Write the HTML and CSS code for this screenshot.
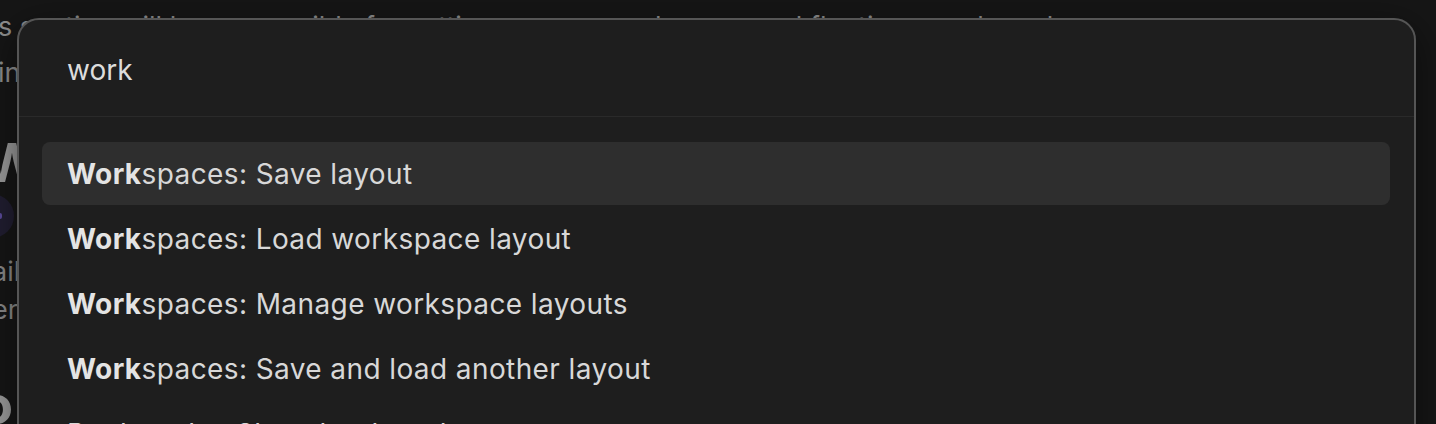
FILE: index.html
```html
<!DOCTYPE html>
<html lang="en">
<head>
<meta charset="utf-8">
<title>Command palette</title>
<link rel="stylesheet" href="styles.css">
</head>
<body>
<main class="page">
  <p class="line">s section will be responsible for setting up your workspace and floating panels and more</p>
  <p class="line">ing the layout for each device, then save it as a workspace layout</p>
  <h2 class="heading">Workspaces</h2>
  <div class="avatar-row"><span class="avatar"><span class="avatar-dot"></span></span></div>
  <p class="line line-small">ail</p>
  <p class="line line-small">er</p>
  <h2 class="heading heading-low">o</h2>
</main>

<div class="prompt" role="dialog">
  <div class="prompt-input">work</div>
  <ul class="suggestions">
    <li class="suggestion is-selected"><b>Work</b>spaces: Save layout</li>
    <li class="suggestion"><b>Work</b>spaces: Load workspace layout</li>
    <li class="suggestion"><b>Work</b>spaces: Manage workspace layouts</li>
    <li class="suggestion"><b>Work</b>spaces: Save and load another layout</li>
    <li class="suggestion">Bookmarks: Show bookmarks</li>
  </ul>
</div>
</body>
</html>
```

FILE: styles.css
```css
* { box-sizing: border-box; }

html, body {
  margin: 0;
  padding: 0;
  height: 100%;
  overflow: hidden;
}

body {
  background: #161616;
  font-family: Inter, "Noto Sans", "Liberation Sans", sans-serif;
  color: #9a9a9a;
  position: relative;
}

.page {
  padding-top: 4px;
  margin-left: -2px;
}

.line {
  margin: 0;
  font-size: 27px;
  line-height: 46px;
  white-space: nowrap;
  color: #8f8f8f;
}

.heading {
  margin: 39px 0 0 -14px;
  font-size: 54px;
  line-height: 56px;
  font-weight: 700;
  color: #9c9c9c;
}

.avatar-row {
  height: 50px;
  display: flex;
  align-items: center;
}

.avatar {
  width: 44px;
  height: 44px;
  border-radius: 50%;
  background: #211e31;
  margin-left: -28px;
  display: flex;
  align-items: center;
  justify-content: flex-end;
}

.avatar-dot {
  width: 4px;
  height: 6px;
  background: #5b4b9c;
  border-radius: 2px;
  margin-right: 12px;
}

.line-small {
  line-height: 38px;
  margin-left: -6px;
  color: #8a8a8a;
}

.avatar-row + .line-small {
  margin-top: 12px;
}

.heading-low {
  margin-top: 48px;
  margin-left: -18px;
}

.prompt {
  position: absolute;
  left: 17px;
  top: 18px;
  width: 1399px;
  height: 480px;
  background: #1e1e1e;
  border: 2px solid #555555;
  border-radius: 22px;
  box-shadow: 0 10px 40px rgba(0, 0, 0, 0.5);
}

.prompt-input {
  height: 97px;
  padding-left: 48px;
  padding-top: 4px;
  display: flex;
  align-items: center;
  font-size: 28px;
  color: #dcdcdc;
  border-bottom: 1px solid #2a2a2a;
}

.suggestions {
  list-style: none;
  margin: 0;
  padding: 25px 24px 0 23px;
}

.suggestion {
  height: 63px;
  margin-bottom: 2px;
  padding: 0 25px;
  display: flex;
  align-items: center;
  font-size: 28px;
  letter-spacing: 0.4px;
  color: #d8d8d8;
  border-radius: 8px;
  white-space: nowrap;
}

.suggestion b {
  font-weight: 700;
  color: #e4e4e4;
}

.suggestion.is-selected {
  background: #2e2e2e;
}
```
